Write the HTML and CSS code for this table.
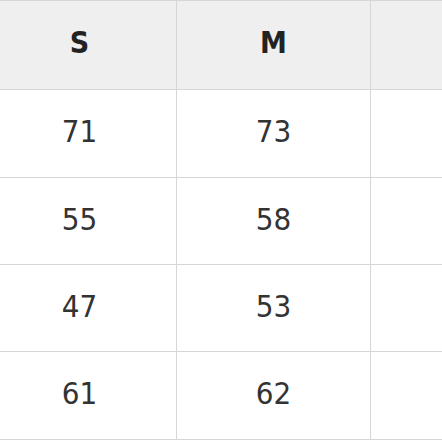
FILE: index.html
```html
<!DOCTYPE html>
<html>
<head>
<meta charset="utf-8">
<link rel="stylesheet" href="styles.css">
</head>
<body>
<div class="sheet">
  <div class="size-table">
    <div class="cell head">S</div><div class="cell head">M</div><div class="cell head"></div>
    <div class="cell">71</div><div class="cell">73</div><div class="cell"></div>
    <div class="cell">55</div><div class="cell">58</div><div class="cell"></div>
    <div class="cell">47</div><div class="cell">53</div><div class="cell"></div>
    <div class="cell">61</div><div class="cell">62</div><div class="cell"></div>
  </div>
</div>
</body>
</html>
```
FILE: styles.css
```css
html, body {
  margin: 0;
  padding: 0;
  background: #ffffff;
  overflow: hidden;
}
.sheet {
  width: 442px;
  height: 442px;
  overflow: hidden;
}
.size-table {
  margin-left: -17px;
  display: grid;
  grid-template-columns: 194px 194px 194px;
  grid-template-rows: 89px 88px 87px 87px 88px;
  border-top: 1px solid #d6d6d6;
  width: 582px;
}
.cell {
  box-sizing: border-box;
  padding-bottom: 5px;
  border-right: 1px solid #d6d6d6;
  border-bottom: 1px solid #d6d6d6;
  display: flex;
  align-items: center;
  justify-content: center;
  font-family: "DejaVu Sans Condensed", "DejaVu Sans", sans-serif;
  font-size: 31px;
  color: #333333;
}
.head {
  background: #efefef;
  font-weight: bold;
  font-size: 30px;
  color: #222222;
}
```
